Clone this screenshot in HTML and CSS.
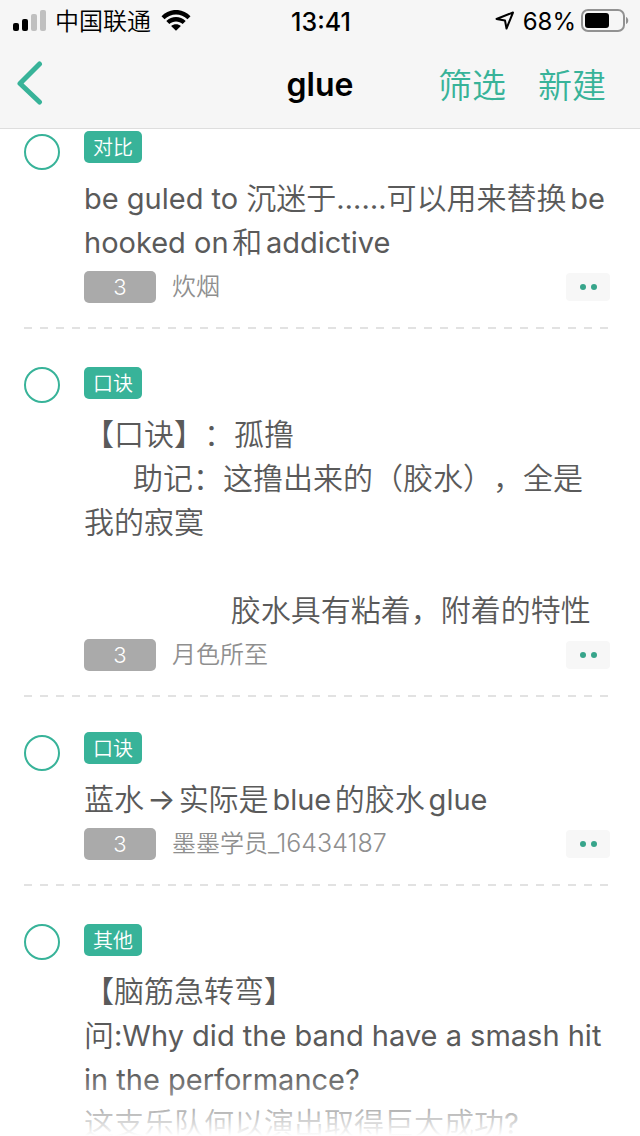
FILE: index.html
```html
<!DOCTYPE html>
<html lang="zh-CN">
<head>
<meta charset="utf-8">
<meta name="viewport" content="width=device-width, initial-scale=1">
<title>glue</title>
<link rel="stylesheet" href="styles.css">
</head>
<body>
<div class="screen">
  <header class="header">
    <div class="status">
      <div class="status-side">
        <svg class="signal" width="34" height="22" viewBox="0 0 34 22" aria-hidden="true">
          <rect x="0" y="13" width="6" height="8" rx="2"/>
          <rect x="9" y="9" width="6" height="12" rx="2"/>
          <rect class="off" x="18" y="4" width="6" height="17" rx="2"/>
          <rect class="off" x="27" y="0" width="6" height="21" rx="2"/>
        </svg>
        <span class="carrier">中国联通</span>
        <svg class="wifi" width="30" height="22" viewBox="0 0 30 22" aria-hidden="true">
          <path d="M0.5 6.2C8.500-2.200 21.500-2.200 29.500 6.200L26.500 9.200C20 2.900 10 2.900 3.500 9.200Z"/>
          <path d="M5.300 11C10.700 5.700 19.300 5.700 24.700 11L21.700 14C18 10.500 12 10.500 8.300 14Z"/>
          <path d="M10.100 16C12.900 13.500 17.100 13.500 19.900 16L15 20.800Z"/>
        </svg>
      </div>
      <div class="clock">13:41</div>
      <div class="status-side status-right">
        <svg class="locate" width="20" height="20" viewBox="0 0 20 20" aria-hidden="true">
          <path d="M1.500 8L18 1.500L11.500 17.500L10 9.500Z"/>
        </svg>
        <span class="percent">68%</span>
        <svg class="battery" width="48" height="24" viewBox="0 0 48 24" aria-hidden="true">
          <rect class="shell" x="1" y="1" width="42" height="21" rx="6"/>
          <rect x="4" y="4" width="24" height="15" rx="3"/>
          <path class="cap" d="M45 8C48 9 48 14 45 15Z"/>
        </svg>
      </div>
    </div>
    <nav class="nav">
      <button class="back" type="button" aria-label="返回">
        <svg width="28" height="46" viewBox="0 0 28 46" aria-hidden="true"><path d="M23.500 3L4 22.500L23.500 41"/></svg>
      </button>
      <h1 class="title">glue</h1>
      <div class="actions">
        <button type="button">筛选</button>
        <button type="button">新建</button>
      </div>
    </nav>
  </header>

  <main class="list">
    <article class="item">
      <input class="pick" type="checkbox" aria-label="选择 炊烟 的助记">
      <div class="body">
        <span class="tag">对比</span>
        <p class="text"><span class="latin">be guled to </span>沉迷于<span class="latin">……</span>可以用来替换<span class="latin">be hooked on</span>和<span class="latin">addictive</span></p>
        <div class="meta">
          <button class="count" type="button">3</button>
          <span class="author">炊烟</span>
          <button class="more" type="button" aria-label="更多"><i></i><i></i></button>
        </div>
      </div>
    </article>

    <article class="item item-note">
      <input class="pick" type="checkbox" aria-label="选择 月色所至 的助记">
      <div class="body">
        <span class="tag">口诀</span>
        <p class="text">【口诀】：孤撸
<span class="latin">      </span>助记：这撸出来的（胶水），全是我的寂寞

<span class="latin">                  </span>胶水具有粘着，附着的特性</p>
        <div class="meta">
          <button class="count" type="button">3</button>
          <span class="author">月色所至</span>
          <button class="more" type="button" aria-label="更多"><i></i><i></i></button>
        </div>
      </div>
    </article>

    <article class="item">
      <input class="pick" type="checkbox" aria-label="选择 墨墨学员_16434187 的助记">
      <div class="body">
        <span class="tag">口诀</span>
        <p class="text">蓝水<span class="arrow">→</span>实际是<span class="latin">blue</span>的胶水<span class="latin">glue</span></p>
        <div class="meta">
          <button class="count" type="button">3</button>
          <span class="author">墨墨学员<span class="author-id">_16434187</span></span>
          <button class="more" type="button" aria-label="更多"><i></i><i></i></button>
        </div>
      </div>
    </article>

    <article class="item item-note">
      <input class="pick" type="checkbox" aria-label="选择 脑筋急转弯 助记">
      <div class="body">
        <span class="tag">其他</span>
        <p class="text text-tight">【脑筋急转弯】
问<span class="latin">:Why did the band have a smash hit in the performance?</span>
这支乐队何以演出取得巨大成功<span class="latin">?</span></p>
      </div>
    </article>
  </main>
  <div class="fade"></div>
</div>
</body>
</html>
```

FILE: styles.css
```css
* {
  box-sizing: border-box;
}

body {
  margin: 0;
  background: #fff;
  color: #5a5a5a;
  font-family: Inter, "Noto Sans CJK SC", sans-serif;
}

button {
  margin: 0;
  padding: 0;
  border: 0;
  background: none;
  color: inherit;
  font: inherit;
}

svg {
  display: block;
}

.screen {
  position: relative;
  display: flex;
  flex-direction: column;
  height: 100vh;
  overflow: hidden;
}

.header {
  flex: none;
  background: #f6f6f6;
  border-bottom: 1px solid #dedede;
  color: #000;
}

.status {
  display: grid;
  grid-template-columns: 1fr auto 1fr;
  align-items: center;
  height: 40px;
  padding: 0 11px 0 13px;
  font-size: 24px;
  line-height: 40px;
}

.status-side {
  display: flex;
  align-items: center;
}

.status-right {
  justify-content: flex-end;
}

.signal .off {
  fill: #c0c0c0;
}

.carrier {
  margin: 0 10px 0 8px;
  padding-top: 2px;
  font-weight: 350;
}

.clock {
  padding-top: 2px;
  font-size: 25px;
  font-weight: 500;
}

.locate path {
  fill: none;
  stroke: #000;
  stroke-width: 2;
  stroke-linejoin: round;
}

.percent {
  margin: 0 5px 0 8px;
  padding-top: 2px;
}

.battery .shell {
  fill: none;
  stroke: #929292;
  stroke-width: 2;
}

.battery .cap {
  fill: #929292;
}

.nav {
  display: grid;
  grid-template-columns: 1fr auto 1fr;
  align-items: center;
  height: 88px;
  padding: 0 34px 0 16px;
}

.back {
  justify-self: start;
}

.back path {
  fill: none;
  stroke: #38b399;
  stroke-width: 5;
  stroke-linecap: round;
  stroke-linejoin: round;
}

.title {
  margin: 0 0 0 18px;
  padding-top: 2px;
  font-size: 32px;
  font-weight: 600;
  line-height: 44px;
}

.actions {
  display: flex;
  justify-content: flex-end;
  gap: 32px;
  padding-top: 3px;
  color: #38b399;
  font-size: 34px;
  font-weight: 350;
  line-height: 44px;
}

.list {
  flex: 1;
  min-height: 0;
  overflow: hidden;
}

.item {
  display: flex;
  align-items: flex-start;
  gap: 24px;
  margin: 0 30px 0 24px;
  padding: 35px 0 26px;
  background: repeating-linear-gradient(90deg, #e2e2e2 0 8px, transparent 8px 16px) left bottom / 100% 2px no-repeat;
}

.item:first-child {
  padding-top: 2px;
}

.pick {
  flex: none;
  width: 36px;
  height: 36px;
  margin: 3px 0 0;
  border: 2px solid #38b399;
  border-radius: 50%;
  appearance: none;
}

.body {
  flex: 1;
  min-width: 0;
}

.item-note .body {
  padding-top: 3px;
}

.tag {
  display: block;
  width: 58px;
  height: 32px;
  padding-top: 1px;
  border-radius: 5px;
  background: #38b399;
  color: #fff;
  font-size: 20px;
  font-weight: 350;
  line-height: 32px;
  text-align: center;
}

.text {
  margin: 13px 0 7px;
  font-size: 30px;
  font-weight: 350;
  line-height: 44px;
  white-space: pre-wrap;
  text-autospace: normal;
  text-spacing-trim: space-all;
}

.text-tight {
  text-autospace: no-autospace;
}

.latin {
  font-size: 29px;
  font-weight: 400;
  line-height: 40px;
}

.arrow {
  margin: 0 3px;
  font-weight: 400;
  line-height: 40px;
}

.meta {
  display: flex;
  align-items: center;
  height: 32px;
  color: #8f8f8f;
  font-size: 24px;
  font-weight: 350;
  line-height: 32px;
}

.author-id {
  font-size: 25px;
  line-height: 28px;
}

.count {
  width: 72px;
  height: 32px;
  margin-right: 16px;
  border-radius: 5px;
  background: #aaa;
  color: #fff;
  font-size: 22px;
}

.more {
  display: flex;
  align-items: center;
  justify-content: center;
  gap: 5px;
  width: 44px;
  height: 28px;
  margin-left: auto;
  border-radius: 4px;
  background: #f7f7f7;
}

.more i {
  width: 6px;
  height: 6px;
  border-radius: 50%;
  background: #38a58b;
}

.fade {
  position: absolute;
  right: 0;
  bottom: 0;
  left: 0;
  height: 64px;
  background: linear-gradient(rgba(255, 255, 255, 0), rgba(255, 255, 255, 0.6) 65%, #fff);
  pointer-events: none;
}
```
